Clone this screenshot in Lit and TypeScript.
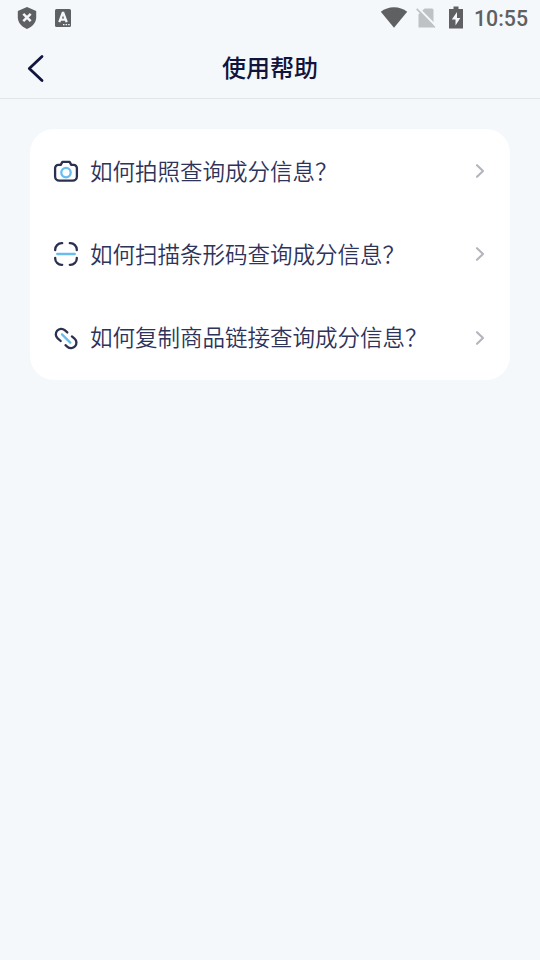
import { LitElement, html, css, svg } from "lit";
import { customElement, property } from "lit/decorators.js";

const icons: Record<string, unknown> = {
  camera: svg`
    <path d="M9.4 3.9h7.2l1.7 3h2.4a3.2 3.2 0 0 1 3.2 3.2v8.4a4.2 4.2 0 0 1-4.2 4.2H6.3a4.2 4.2 0 0 1-4.2-4.2v-8.4a3.2 3.2 0 0 1 3.2-3.2h2.4z" />
    <circle class="accent" cx="13" cy="14.6" r="4.7" />`,
  scan: svg`
    <path d="M9.2 2.2H8.6A6.4 6.4 0 0 0 2.2 8.6v.6M16.8 2.2h.6a6.4 6.4 0 0 1 6.4 6.4v.6M9.2 23.8h-.6a6.4 6.4 0 0 1-6.4-6.4v-.6M16.8 23.8h.6a6.4 6.4 0 0 0 6.4-6.4v-.6" />
    <path class="accent" d="M4.2 13h17.6" />`,
  link: svg`
    <path d="M7.700 16 4.660 13.380A5.400 5.400 0 0 1 11.740 5.220L14.300 7.450M18.900 11.450 21.540 13.720A5.400 5.400 0 0 1 14.460 21.880L12.500 20.200" />
    <path class="accent" d="M9 9.400l8.300 8.200" />`,
};

@customElement("status-bar")
export class StatusBar extends LitElement {
  static styles = css`
    :host {
      display: flex;
      align-items: center;
      height: 36px;
      padding: 0 12px 0 17px;
      box-sizing: border-box;
      color: #5e6062;
      font: 500 21.3px/34px Roboto, sans-serif;
    }
    svg { display: block; fill: currentColor; }
    .app { margin-left: 17px; }
    .gap { flex: 1; }
    .sim { margin-left: 8px; color: #bfc2c4; }
    .battery { margin: 0 0 2px 13px; }
    .time { margin: 2px 0 0 11px; }
    .cut { fill: none; stroke: #f4f8fb; }
    .slash { fill: none; stroke: currentColor; }
    .light { fill: #f4f8fb; }
  `;
  render() {
    return html`
      <svg width="20" height="24" viewBox="0 0 20 24">
        <path d="M10 1 19.2 5v6.3c0 5.2-3.8 9.8-9.2 11.7C4.6 21.1.8 16.5.8 11.3V5z" />
        <path class="cut" stroke-width="2.5" d="m6.3 7.8 7.4 7.4m0-7.4-7.4 7.4" />
      </svg>
      <svg class="app" width="18" height="20" viewBox="0 0 18 20">
        <path d="M2.5 1h13A1.5 1.5 0 0 1 17 2.5v15a1.5 1.5 0 0 1-1.5 1.5h-13A1.5 1.5 0 0 1 1 17.5v-15A1.5 1.5 0 0 1 2.5 1z" />
        <path class="cut" stroke-width="2.3" d="M5.3 14.2 8.7 5h.6l3.4 9.2M6.7 11.6h4.6" />
        <path class="light" d="M9 16h1.5v1.3H9zM11.6 16h1.5v1.3h-1.5zM14.2 16h1.5v1.3h-1.5z" />
      </svg>
      <div class="gap"></div>
      <svg width="28" height="22" viewBox="0 0 28 22">
        <path d="M14 20.7.8 4.7C4.600 1.900 9.100.3 14 .3s9.400 1.600 13.200 4.400z" />
      </svg>
      <svg class="sim" width="20" height="22" viewBox="0 0 20 22">
        <path d="M8.5 1.5H16A1.5 1.5 0 0 1 17.5 3v17.500h-15v-13z" />
        <path class="cut" stroke-width="2.2" d="M1.8.7 20 19" />
        <path class="slash" stroke-width="1.7" d="M.7 1.9 18.8 20.5" />
      </svg>
      <svg class="battery" width="14" height="23" viewBox="0 0 14 23">
        <path d="M4.5.5h5V3H14v19.500H0V3h4.500z" />
        <path class="light" d="M8 6 2.8 13.5h3.7V19.500L11.300 12H8z" />
      </svg>
      <span class="time">10:55</span>
    `;
  }
}

@customElement("help-row")
export class HelpRow extends LitElement {
  @property() icon = "";
  @property() label = "";
  static styles = css`
    :host {
      display: flex;
      align-items: center;
      padding: 0 24px 0 23px;
    }
    svg {
      display: block;
      flex: none;
      fill: none;
      stroke-linecap: round;
      stroke-linejoin: round;
    }
    .icon { stroke: #2b3050; stroke-width: 2.3; }
    .accent { stroke: #68bdec; }
    .label {
      flex: 1;
      margin: 0 0 3px 11px;
      color: #2e335a;
      font: 350 22.5px/34px "Noto Sans CJK SC", sans-serif;
      white-space: nowrap;
    }
    .chevron { stroke: #b2b5bb; stroke-width: 2.1; }
  `;
  render() {
    return html`
      <svg class="icon" width="26" height="26" viewBox="0 0 26 26">${icons[this.icon]}</svg>
      <span class="label" lang="zh-CN">${this.label}</span>
      <svg class="chevron" width="12" height="16" viewBox="0 0 12 16">
        <path d="m3 2.2 6 5.8-6 5.8" />
      </svg>
    `;
  }
}

@customElement("app-root")
export class AppRoot extends LitElement {
  static styles = css`
    :host {
      display: block;
      min-height: 960px;
      background: #f4f8fb;
    }
    header {
      display: grid;
      grid-template-columns: 60px 1fr 60px;
      align-items: center;
      height: 63px;
      box-sizing: border-box;
      border-bottom: 1px solid #e0e5e9;
    }
    .back {
      display: block;
      margin: 1px 0 0 26px;
      fill: none;
      stroke: #11143c;
      stroke-width: 2.8;
      stroke-linecap: round;
      stroke-linejoin: round;
    }
    h1 {
      margin: 0;
      text-align: center;
      color: #11143c;
      font: 500 24px/36px "Noto Sans CJK SC", sans-serif;
    }
    .card {
      display: grid;
      grid-template-rows: 84px 82px 85px;
      margin: 30px 30px 0;
      border-radius: 24px;
      background: #fff;
    }
  `;
  render() {
    return html`
      <status-bar></status-bar>
      <header>
        <svg class="back" width="20" height="30" viewBox="0 0 20 30">
          <path d="M16 3.5 3.3 15.5 16 27.5" />
        </svg>
        <h1>使用帮助</h1>
      </header>
      <main class="card">
        <help-row icon="camera" label="如何拍照查询成分信息？"></help-row>
        <help-row icon="scan" label="如何扫描条形码查询成分信息？"></help-row>
        <help-row icon="link" label="如何复制商品链接查询成分信息？"></help-row>
      </main>
    `;
  }
}
